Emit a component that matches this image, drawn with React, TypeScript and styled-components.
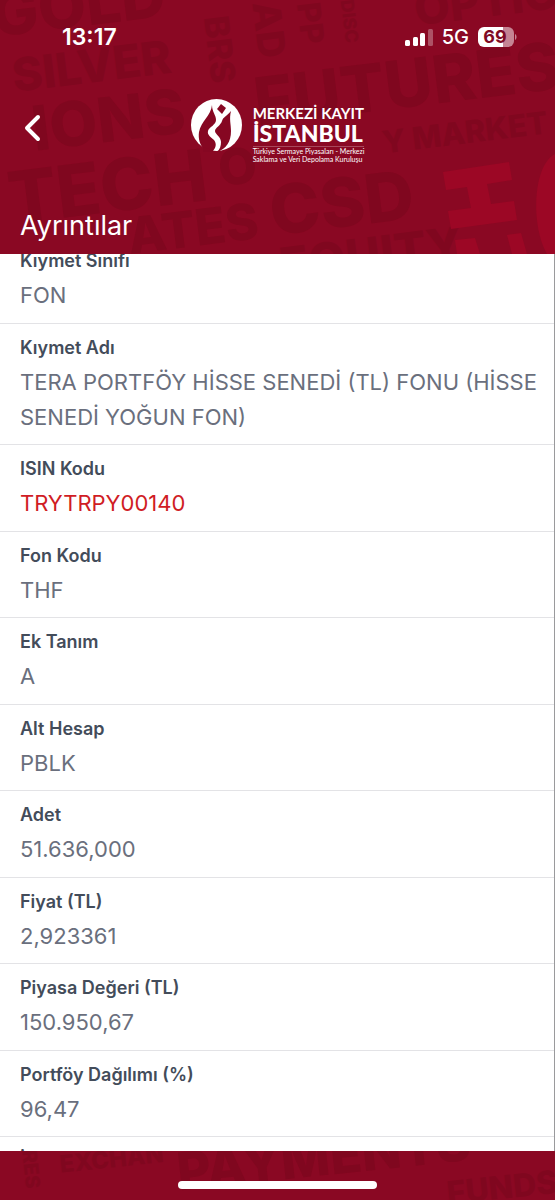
import { useLayoutEffect, useRef } from "react";
import styled, { createGlobalStyle } from "styled-components";

const GlobalStyle = createGlobalStyle`
  * { box-sizing: border-box; }
  body {
    margin: 0;
    background: #ffffff;
    font-family: Inter, "Liberation Sans", sans-serif;
  }
`;

const Screen = styled.div`
  display: flex;
  flex-direction: column;
  height: 100vh;
`;

const Header = styled.header`
  position: relative;
  flex: none;
  overflow: hidden;
  background: #8a0823;
  color: #ffffff;
`;

const Backdrop = styled.svg`
  position: absolute;
  inset: 0;
  width: 100%;
  height: 100%;
  fill: #80071f;
  font-family: Inter, sans-serif;
  font-weight: 800;
  pointer-events: none;
`;

const StatusBar = styled.div`
  position: relative;
  display: flex;
  align-items: center;
  justify-content: space-between;
  height: 72px;
  padding: 2px 38px 0 62px;
`;

const Clock = styled.time`
  font-size: 23px;
  font-weight: 600;
`;

const StatusIcons = styled.div`
  display: flex;
  align-items: center;
  gap: 9px;
`;

const Network = styled.span`
  font-size: 20px;
  font-weight: 500;
`;

const NavBar = styled.div`
  position: relative;
  display: grid;
  grid-template-columns: 1fr auto 1fr;
  align-items: center;
  height: 112px;
  padding: 0 20px;
`;

const BackButton = styled.button`
  display: flex;
  align-items: center;
  justify-self: start;
  padding: 4px;
  border: 0;
  background: none;
  color: inherit;
  cursor: pointer;
`;

const Brand = styled.div`
  display: flex;
  gap: 11px;
  padding-top: 6px;
`;

const BrandText = styled.div`
  display: flex;
  flex-direction: column;
  padding-top: 6px;
  white-space: nowrap;
  font-family: Lato, sans-serif;
`;

const BrandTop = styled.span`
  font-size: 15px;
  line-height: 17px;
  font-weight: 700;
`;

const BrandName = styled.span`
  font-size: 23px;
  line-height: 22px;
  font-weight: 900;
`;

const BrandNote = styled.span`
  margin-top: 2px;
  border-top: 1px solid #a8485c;
  font-size: 7px;
  line-height: 8px;
`;

const Title = styled.h1`
  position: relative;
  margin: 0;
  padding: 24px 20px 10px;
  font-size: 27px;
  line-height: 36px;
  font-weight: 400;
`;

const Details = styled.main`
  flex: 1;
  min-height: 0;
  overflow-y: auto;
  scrollbar-width: none;
  border-right: 1px solid #9a9a9c;
`;

const List = styled.dl`
  margin: 0;
`;

const Row = styled.div`
  padding: 12px 12px 9px 20px;
  border-bottom: 1px solid #e3e3e6;

  &:nth-child(odd) {
    padding-bottom: 10px;
  }
`;

const Label = styled.dt`
  color: #434c5a;
  font-size: 18px;
  line-height: 24px;
  font-weight: 600;
`;

const Value = styled.dd<{ $accent?: boolean }>`
  margin: 5px 0 0;
  color: ${(p) => (p.$accent ? "#d01c24" : "#6a6f7d")};
  font-size: 22px;
  line-height: 35px;
`;

const Footer = styled.footer`
  position: relative;
  flex: none;
  display: flex;
  justify-content: center;
  align-items: center;
  height: 49px;
  padding-top: 18px;
  overflow: hidden;
  background: #8a0823;
`;

const HomeIndicator = styled.div`
  position: relative;
  width: 36%;
  height: 8px;
  border-radius: 4px;
  background: #ffffff;
`;

const fields = [
  { label: "Kıymet Sınıfı", value: "FON" },
  { label: "Kıymet Adı", value: "TERA PORTFÖY HİSSE SENEDİ (TL) FONU (HİSSE SENEDİ YOĞUN FON)" },
  { label: "ISIN Kodu", value: "TRYTRPY00140", accent: true },
  { label: "Fon Kodu", value: "THF" },
  { label: "Ek Tanım", value: "A" },
  { label: "Alt Hesap", value: "PBLK" },
  { label: "Adet", value: "51.636,000" },
  { label: "Fiyat (TL)", value: "2,923361" },
  { label: "Piyasa Değeri (TL)", value: "150.950,67" },
  { label: "Portföy Dağılımı (%)", value: "96,47" },
  { label: "İhraççı", value: "" },
];

function HeaderBackdrop() {
  return (
    <Backdrop viewBox="0 0 555 254" preserveAspectRatio="xMidYMid slice" aria-hidden="true">
      <g transform="rotate(-7)">
        <text x="-10" y="36" fontSize="62">GOLD</text>
        <text x="3" y="93" fontSize="46">SILVER</text>
        <text x="16" y="154" fontSize="62">IONS</text>
        <text x="-16" y="224" fontSize="72">TECH</text>
        <text x="196" y="212" fontSize="50">O</text>
        <text x="98" y="268" fontSize="50">ATES</text>
        <text x="240" y="156" fontSize="66">FUTURES</text>
        <text x="362" y="199" fontSize="31">Y MARKET</text>
        <text x="242" y="267" fontSize="68">CSD</text>
        <text x="245" y="315" fontSize="48">EQUITY</text>
        <text x="410" y="76" fontSize="46">OPTION</text>
      </g>
      <g transform="rotate(83)">
        <text x="42" y="-200" fontSize="34">BRS</text>
        <text x="34" y="-250" fontSize="38">AD</text>
        <text x="40" y="-294" fontSize="32">PP</text>
        <text x="42" y="-338" fontSize="18">DISC</text>
      </g>
      <g fill="#9c0725">
        <path d="M443 172 509 162 512 180 487 184 491 204 514 201 517 220 451 229 448 211 471 208 467 187 446 190Z" />
        <path d="M455 240 475 238 480 254 457 254Z" />
        <path d="M507 235 521 233 527 254 512 254Z" />
        <path d="M555 154C532 166 531 227 547 254H555Z" />
      </g>
    </Backdrop>
  );
}

function FooterBackdrop() {
  return (
    <Backdrop viewBox="0 0 555 49" preserveAspectRatio="xMidYMid slice" aria-hidden="true">
      <g transform="rotate(-6)">
        <text x="58" y="28" fontSize="24">EXCHAN</text>
        <text x="174" y="58" fontSize="52">PAYMENTS</text>
        <text x="440" y="100" fontSize="32">FUNDS</text>
      </g>
      <text x="2" y="-22" fontSize="20" transform="rotate(84)">RES</text>
    </Backdrop>
  );
}

function SignalIcon() {
  return (
    <svg width="28" height="18" viewBox="0 0 28 18" fill="#fff" aria-label="Signal">
      <rect x="0" y="12" width="5" height="6" rx="1.5" />
      <rect x="8" y="9" width="5" height="9" rx="1.5" />
      <rect x="15" y="5" width="5" height="13" rx="1.5" />
      <rect x="23" y="1" width="5" height="17" rx="1.5" opacity=".3" />
    </svg>
  );
}

function BatteryIcon() {
  return (
    <svg width="39" height="20" viewBox="0 0 39 20" aria-label="Battery">
      <path d="M25 0h5a6 6 0 0 1 6 6v8a6 6 0 0 1-6 6h-5Z" fill="#c58493" />
      <path d="M6 0h19v20H6a6 6 0 0 1-6-6V6a6 6 0 0 1 6-6Z" fill="#fff" />
      <path d="M37 7c2 1 2 5 0 6Z" fill="#c58493" />
      <text x="17" y="16" textAnchor="middle" fontSize="18" fontWeight="700" fill="#7f0a24">69</text>
    </svg>
  );
}

function BrandMark() {
  return (
    <svg width="51" height="53" viewBox="0 0 51 53" aria-hidden="true">
      <ellipse cx="25.5" cy="26" rx="25.5" ry="26" fill="#fff" />
      <path
        fill="#860722"
        d="M21 6C20 17 10 22 8 33C7 40 9 46 13 50L21 53C25 49 26 45 23 41C20 38 16 36 17 32C18 28 25 26 25 21C25 16 21 13 21 6Z"
      />
      <path
        fill="#860722"
        d="M40 12C35 18 32 18 31 22C30 26 24 29 24 32C24 35 30 38 30 43C30 47 29 50 26 53C35 50 40 43 40 32C40 25 38 20 40 12Z"
      />
      <path fill="#860722" d="m30 5 5 4-4 6-5-5Z" />
      <path fill="#860722" d="M12 48 21 51V53H12Z" />
    </svg>
  );
}

export default function App() {
  const scroller = useRef<HTMLElement>(null);

  useLayoutEffect(() => {
    if (scroller.current) scroller.current.scrollTop = 17;
  }, []);

  return (
    <>
      <GlobalStyle />
      <Screen>
        <Header>
          <HeaderBackdrop />
          <StatusBar>
            <Clock>13:17</Clock>
            <StatusIcons>
              <SignalIcon />
              <Network>5G</Network>
              <BatteryIcon />
            </StatusIcons>
          </StatusBar>
          <NavBar>
            <BackButton type="button" aria-label="Geri">
              <svg width="17" height="28" viewBox="0 0 17 28" fill="none" stroke="#fff" strokeWidth="4" strokeLinecap="round" strokeLinejoin="round">
                <path d="M14 3 3 14 14 25" />
              </svg>
            </BackButton>
            <Brand>
              <BrandMark />
              <BrandText>
                <BrandTop>MERKEZİ KAYIT</BrandTop>
                <BrandName>İSTANBUL</BrandName>
                <BrandNote>
                  Türkiye Sermaye Piyasaları - Merkezi
                  <br />
                  Saklama ve Veri Depolama Kuruluşu
                </BrandNote>
              </BrandText>
            </Brand>
          </NavBar>
          <Title>Ayrıntılar</Title>
        </Header>
        <Details ref={scroller}>
          <List>
            {fields.map((field) => (
              <Row key={field.label}>
                <Label>{field.label}</Label>
                <Value $accent={field.accent}>{field.value}</Value>
              </Row>
            ))}
          </List>
        </Details>
        <Footer>
          <FooterBackdrop />
          <HomeIndicator />
        </Footer>
      </Screen>
    </>
  );
}
